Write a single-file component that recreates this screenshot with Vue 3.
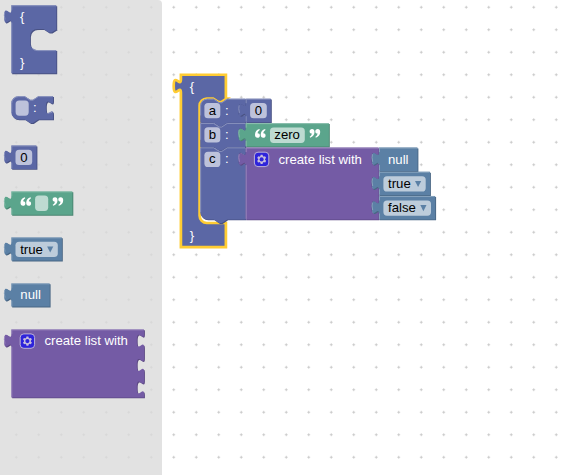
<script setup>
const hues = {
  object: { base: '#5b67a5', dark: '#495284', light: '#8c95c0' },
  text: { base: '#5ba58c', dark: '#498470', light: '#8cc0ae' },
  logic: { base: '#5b80a5', dark: '#496684', light: '#8ca6c0' },
  list: { base: '#745ba5', dark: '#5d4984', light: '#9e8cc0' },
}

// Puzzle tab curves (downwards / upwards) and the statement notch
const TAB_DOWN = 'c0,9 -7.2,-7.2 -7.2,6.75 s7.2,-2.25 7.2,6.75'
const TAB_UP = 'c0,-9 -7.2,7.2 -7.2,-6.75 s7.2,2.25 7.2,-6.75'
const NOTCH_R = 'l5.4,3.6 2.7,0 5.4,-3.6'
const NOTCH_L = 'l-5.4,3.6 -2.7,0 -5.4,-3.6'

// Block with an output tab on the left and optional value inputs on the right
function valueBlock(hue, x, y, w, h, inputs = []) {
  const right = inputs.map((t) => `V${y + t + 4.5} ${TAB_DOWN}`).join(' ')
  return {
    hue: hues[hue],
    d: `M${x},${y} H${x + w} ${right} V${y + h} H${x} V${y + 18} ${TAB_UP} Z`,
    hi: `M${x + 0.45},${y + h - 0.5} V${y + 17.5} M${x - 6.3},${y + 14.2} q-1.2,-4.6 -0.3,-7.6 M${x + 0.45},${y + 4.5} V${y + 0.45} H${x + w - 0.5}`,
  }
}

// Key/value member: rounded at the ends of its stack
function memberBlock(x, y, w, h, top, bottom) {
  const start = top ? `M${x},${y + 7.2} a7.2,7.2 0 0 1 7.2,-7.2` : `M${x},${y}`
  const end = bottom ? `H${x + 7.2} a7.2,7.2 0 0 1 -7.2,-7.2` : `H${x}`
  return {
    hue: hues.object,
    d: `${start} H${x + 13.5} ${NOTCH_R} H${x + w} V${y + 4.5} ${TAB_DOWN} V${y + h} H${x + 27} ${NOTCH_L} ${end} Z`,
    hi: `M${x + 0.45},${y + h - 7.2} V${top ? y + 7.2 : y + 0.45} ${top ? 'a6.75,6.75 0 0 1 6.75,-6.75' : ''} H${x + 13.5} ${NOTCH_R} H${x + w - 0.5} M${x + w - 5},${y + 17} l4,-0.8`,
  }
}

function objectBlock(x, y, w, h, top, bottom) {
  const ix = x + 18.7
  return {
    hue: hues.object,
    d: `M${x},${y} H${x + w} V${top} H${ix + 27} ${NOTCH_L} H${ix + 7.2} a7.2,7.2 0 0 0 -7.2,7.2 V${bottom - 7.2} a7.2,7.2 0 0 0 7.2,7.2 H${x + w} V${y + h} H${x} V${y + 18} ${TAB_UP} Z`,
    hi: `M${x + 0.45},${y + h - 0.5} V${y + 17.5} M${x - 6.3},${y + 14.2} q-1.2,-4.6 -0.3,-7.6 M${x + 0.45},${y + 4.5} V${y + 0.45} H${x + w - 0.5} M${ix + 2},${bottom - 2} a7.2,7.2 0 0 0 5.2,2.4 H${x + w - 0.5}`,
  }
}

const selected = { ...objectBlock(180.9, 74.75, 45, 172.3, 98.5, 223), selected: true }

const blocks = [
  objectBlock(11.3, 5.3, 45, 68, 29, 50.2),
  memberBlock(11.3, 96.2, 41.8, 23.2, true, true),
  valueBlock('object', 11.3, 145.5, 25.2, 23.4),
  valueBlock('text', 11.3, 191.4, 61.1, 23.4),
  valueBlock('logic', 11.3, 237.4, 50.6, 23.2),
  valueBlock('logic', 11.3, 283.4, 38.4, 23.2),
  valueBlock('list', 11.3, 329.4, 132.7, 68, [0, 24.3, 46.8]),
  selected,
  memberBlock(200.2, 98.7, 45.4, 24, true, false),
  memberBlock(200.2, 123, 45.4, 24, false, false),
  memberBlock(200.2, 147.4, 45.4, 72, false, true),
  valueBlock('object', 245.7, 98.7, 25.2, 23.5),
  valueBlock('text', 245.7, 123.2, 83.2, 23.4),
  valueBlock('list', 245.7, 147.6, 133, 71.8, [0, 24.2, 48.4]),
  valueBlock('logic', 379, 147.6, 38.5, 23.4),
  valueBlock('logic', 379, 171.8, 51, 23.4),
  valueBlock('logic', 379, 196, 56.2, 23.4),
]

const fields = [
  [15.6, 100.4, 13.1], [15.5, 149.8, 16.7], [35.1, 195.6, 13.1], [15.5, 241.7, 42.3],
  [204.4, 103, 15.9], [204.4, 127.3, 15.9], [204.4, 151.7, 15.9],
  [250.1, 103, 16.7], [270, 127.6, 34.8],
  [383.4, 176.2, 42.3], [383.4, 200.4, 47.6],
]

const labels = [
  ['{', 20, 21], ['}', 20, 66.6], [':', 33, 112], ['null', 20.3, 299],
  ['create list with', 44.4, 345], ['{', 189.8, 90.7], ['}', 189.8, 240.2],
  [':', 225, 115], [':', 225, 139], [':', 225, 163.4],
  ['create list with', 278.4, 163.8], ['null', 388, 163.8],
]

const values = [
  ['0', 20.2, 162], ['true', 20.2, 253.8], ['a', 208.7, 115], ['b', 208.7, 139], ['c', 208.9, 163.4],
  ['0', 254.8, 115.2], ['zero', 274.3, 139.4], ['true', 388, 188], ['false', 388, 212.2],
]

const arrows = [[47.1, 246.4], [415, 180.9], [420.3, 205.1]]
const gears = [[20.2, 333.9], [254.4, 152.2]]
const quotes = [[20.5, 197.2, 0], [63.2, 205.8, 180], [255, 129.1, 0], [320.2, 137.7, 180]]
const quoteTransform = ([x, y, r]) => `translate(${x} ${y}) rotate(${r})`
</script>

<template>
  <main class="workspace">
    <svg class="canvas" viewBox="0 0 565 475" width="565" height="475">
      <defs>
        <pattern id="grid" x="5" y="-4" width="22.5" height="22.5" patternUnits="userSpaceOnUse">
          <path class="grid-cross" d="M9.9,11.25 h2.7 M11.25,9.9 v2.7" />
        </pattern>
        <g id="quote">
          <path d="M4.4,0 C1.6,0.7 0,2.9 0,5.6 C0,7.5 0.9,8.6 2.5,8.6 C3.9,8.6 4.9,7.7 4.9,6.3 C4.9,5 4,4.1 2.6,4.1 C2.8,2.9 3.4,1.9 4.8,1 Z" />
          <path transform="translate(5.7 0)" d="M4.4,0 C1.6,0.7 0,2.9 0,5.6 C0,7.5 0.9,8.6 2.5,8.6 C3.9,8.6 4.9,7.7 4.9,6.3 C4.9,5 4,4.1 2.6,4.1 C2.8,2.9 3.4,1.9 4.8,1 Z" />
        </g>
        <g id="gear">
          <rect class="gear-box" width="16" height="16" rx="4" />
          <path class="gear-teeth" d="m4.203,7.296 0,1.368 -0.92,0.677 -0.11,0.41 0.9,1.559 0.41,0.11 1.043,-0.457 1.187,0.683 0.127,1.134 0.3,0.3 1.8,0 0.3,-0.299 0.127,-1.138 1.185,-0.682 1.046,0.458 0.409,-0.11 0.9,-1.559 -0.11,-0.41 -0.92,-0.677 0,-1.366 0.92,-0.677 0.11,-0.41 -0.9,-1.559 -0.409,-0.109 -1.046,0.458 -1.185,-0.682 -0.127,-1.138 -0.3,-0.299 -1.8,0 -0.3,0.3 -0.126,1.135 -1.187,0.682 -1.043,-0.457 -0.41,0.11 -0.899,1.559 0.108,0.409z" />
          <circle class="gear-hole" cx="8" cy="8" r="2.3" />
        </g>
      </defs>

      <rect width="565" height="475" fill="url(#grid)" />
      <path class="flyout" d="M0,0 H158 a4,4 0 0 1 4,4 V475 H0 Z" />

      <g v-for="(b, i) in blocks" :key="'b' + i">
        <path v-if="!b.selected" :d="b.d" :fill="b.hue.dark" transform="translate(.9 .9)" />
        <path :d="b.d" :fill="b.hue.base" />
        <path v-if="b.selected" :d="b.d" class="selection" />
        <path v-else :d="b.hi" :stroke="b.hue.light" class="highlight" />
      </g>

      <rect v-for="(f, i) in fields" :key="'f' + i" class="field" :x="f[0]" :y="f[1]" :width="f[2]" height="15.3" rx="3.6" />
      <text v-for="(t, i) in labels" :key="'l' + i" class="label" :x="t[1]" :y="t[2]">{{ t[0] }}</text>
      <text v-for="(t, i) in values" :key="'v' + i" class="value" :x="t[1]" :y="t[2]">{{ t[0] }}</text>
      <path v-for="(a, i) in arrows" :key="'a' + i" class="arrow" :d="`M${a[0]},${a[1]} h6.2 l-3.1,6.2 z`" />
      <use v-for="(g, i) in gears" :key="'g' + i" href="#gear" class="gear" :transform="`translate(${g[0]} ${g[1]}) scale(.9)`" />
      <use v-for="(q, i) in quotes" :key="'q' + i" href="#quote" class="quote" :transform="quoteTransform(q)" />
    </svg>
  </main>
</template>

<style>
body { margin: 0; background: #fff; }
</style>

<style scoped>
.workspace { width: 565px; height: 475px; overflow: hidden; background: #fff; }
.canvas { display: block; font-family: "Liberation Sans", Arial, sans-serif; font-size: 13.2px; }
.grid-cross { stroke: #c4c4c4; stroke-width: 0.9; fill: none; }
.flyout { fill: #dbdbdb; fill-opacity: 0.8; }
.highlight { fill: none; stroke-width: 0.9; }
.selection { fill: none; stroke: #fc3; stroke-width: 2.7; }
.field { fill: #fff; fill-opacity: 0.6; }
.label { fill: #fff; }
.value { fill: #000; }
.arrow { fill: #5b80a5; }
.gear { opacity: 0.6; }
.gear-box { fill: #00f; stroke: #fff; stroke-width: 1; }
.gear-teeth { fill: #fff; }
.gear-hole { fill: #00f; }
.quote { fill: #fff; }
</style>
